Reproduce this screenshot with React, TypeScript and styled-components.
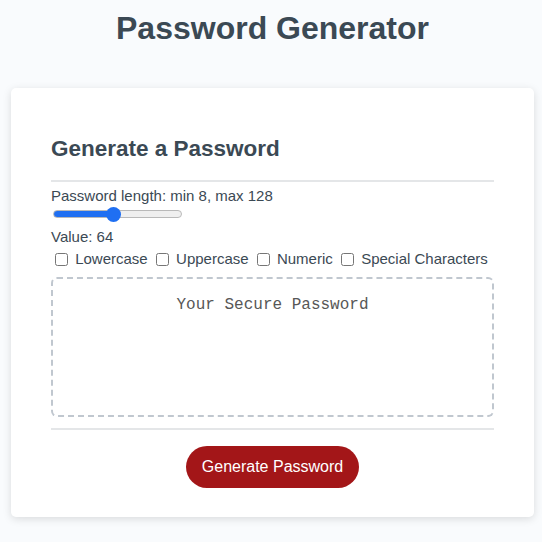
import React, { useState } from "react";
import styled, { createGlobalStyle } from "styled-components";

const GlobalStyle = createGlobalStyle`
  html, body {
    margin: 0;
    padding: 0;
    background: #f9fbfd;
  }
  body {
    font-family: "Liberation Sans", Arial, Helvetica, sans-serif;
    color: hsl(206, 17%, 28%);
  }
  * { box-sizing: border-box; }
`;

const Wrapper = styled.div`
  padding: 10px 8px 24px 11px;
`;

const Header = styled.header`
  text-align: center;
`;

const Title = styled.h1`
  margin: 0 0 41px;
  font-size: 32px;
  line-height: 37px;
  font-weight: 700;
  color: hsl(206, 17%, 28%);
`;

const Card = styled.section`
  background: #fff;
  border-radius: 5px;
  box-shadow: rgba(0, 0, 0, 0.13) 0 2px 8px 0;
  padding: 30px 40px 29px;
  color: hsl(206, 17%, 28%);
`;

const CardHeader = styled.div`
  &::after {
    content: "";
    display: block;
    height: 2px;
    background: #e4e6e8;
  }
`;

const CardTitle = styled.h2`
  margin: 18px 0 19px;
  font-size: 22.5px;
  line-height: 25px;
  font-weight: 700;
`;

const CardBody = styled.div`
  padding-top: 5px;
  font-size: 15px;
  line-height: 17px;
`;

const FieldLabel = styled.label`
  display: block;
`;

const Range = styled.input`
  -webkit-appearance: none;
  appearance: none;
  display: block;
  width: 129px;
  height: 16px;
  margin: 2px 0 6px 2px;
  background: transparent;

  &::-webkit-slider-runnable-track {
    height: 8px;
    border-radius: 4px;
    border: 1px solid #b9b9b9;
    background: linear-gradient(
      to right,
      #1f6ff2 0,
      #1f6ff2 var(--fill),
      #efefef var(--fill),
      #efefef 100%
    );
  }
  &::-webkit-slider-thumb {
    -webkit-appearance: none;
    width: 15px;
    height: 15px;
    border-radius: 50%;
    background: #1f6ff2;
    border: none;
    margin-top: -4.5px;
  }
`;

const ValueText = styled.div`
  margin-bottom: 5px;
`;

const Options = styled.div`
  white-space: nowrap;
`;

const Option = styled.label`
  input {
    margin: 3px 3px 3px 4px;
    vertical-align: -2px;
  }
`;

const Output = styled.textarea`
  display: block;
  width: 100%;
  height: 140px;
  margin: 8px 0 11px;
  padding: 17px 15px 15px;
  border: 2px dashed #c0c7cf;
  border-radius: 6px;
  resize: none;
  overflow: hidden;
  font-family: "Liberation Mono", "Courier New", monospace;
  font-size: 16px;
  line-height: 18px;
  text-align: center;
  color: #444;
  background: #fff;

  &::placeholder {
    color: #575757;
  }
`;

const CardFooter = styled.div`
  text-align: center;
  &::before {
    content: "";
    display: block;
    height: 2px;
    background: #e4e6e8;
  }
`;

const Button = styled.button`
  display: inline-block;
  margin: 16px 0 0;
  padding: 12px 16px;
  border: none;
  border-radius: 25px;
  background: #a31618;
  color: #fff;
  font-family: "Liberation Sans", Arial, sans-serif;
  font-size: 16px;
  line-height: 18px;
  cursor: pointer;
`;

export default function App() {
  const [len, setLen] = useState(64);
  const pct = ((len - 8) / (128 - 8)) * 100;
  const fill = `calc(${pct / 100} * (100% - 15px) + 7px)`;
  return (
    <>
      <GlobalStyle />
      <Wrapper>
        <Header>
          <Title>Password Generator</Title>
        </Header>
        <Card>
          <CardHeader>
            <CardTitle>Generate a Password</CardTitle>
          </CardHeader>
          <CardBody>
            <FieldLabel htmlFor="len">Password length: min 8, max 128</FieldLabel>
            <Range
              id="len"
              type="range"
              min={8}
              max={128}
              value={len}
              onChange={(e) => setLen(Number(e.target.value))}
              style={{ ["--fill" as any]: fill }}
            />
            <ValueText>Value: {len}</ValueText>
            <Options>
              <Option>
                <input type="checkbox" /> Lowercase
              </Option>{" "}
              <Option>
                <input type="checkbox" /> Uppercase
              </Option>{" "}
              <Option>
                <input type="checkbox" /> Numeric
              </Option>{" "}
              <Option>
                <input type="checkbox" /> Special Characters
              </Option>
            </Options>
            <Output readOnly placeholder="Your Secure Password" aria-label="Generated Password" />
          </CardBody>
          <CardFooter>
            <Button>Generate Password</Button>
          </CardFooter>
        </Card>
      </Wrapper>
    </>
  );
}
